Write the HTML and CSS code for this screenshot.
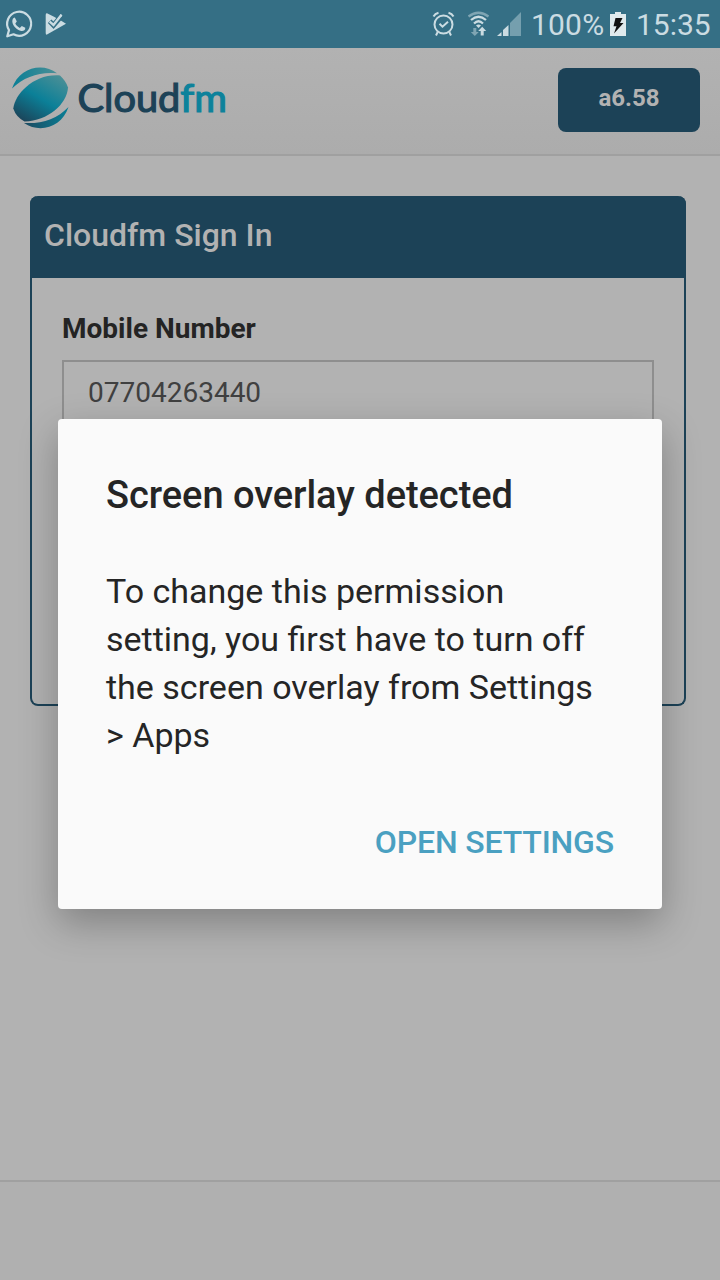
FILE: index.html
```
<!DOCTYPE html>
<html lang="en">
<head>
<meta charset="utf-8">
<title>Cloudfm Sign In</title>
<link rel="stylesheet" href="styles.css">
</head>
<body>
<div class="screen">
  <div class="status">
    <svg class="status-left" width="80" height="48" viewBox="0 0 80 48" fill="none" stroke="#cbdce2">
      <path d="M7.300 36.300L9 30.100A12 12 0 1 1 13.500 34.300Z" stroke-width="2.200" stroke-linejoin="round"/>
      <path d="M14.800 17.500l2 4-1.500 2c1 2 2.500 3.400 4.500 4.400l2-1.900 3.500 1.800c.2 2.500-2 3.500-4 3.200-4.500-.8-8.600-5-9-9.400-.1-2 .8-4 2.500-4.100Z" fill="#cbdce2" stroke="none"/>
      <path d="M47 13.300L54.500 17 57 18.500 61 14 62 15.500 60 20 66 23.700 47 34.600Q45.700 35 45.700 33V15Q45.700 13 47 13.300Z" fill="#cbdce2" stroke="none"/>
      <path d="M49.700 21.300L53.500 25.200 61 16.500" stroke="#356f85" stroke-width="5"/>
      <path d="M49.700 21.600L53.500 25 61.500 14.700" stroke-width="2.400"/>
    </svg>
    <svg class="status-right" width="96" height="48" viewBox="428 0 96 48" fill="none" stroke="#cbdce2">
      <circle cx="443.500" cy="24.500" r="9" stroke-width="2"/>
      <path d="M439.500 23.700l3 3 5.500-5M437.700 32l-1.700 3.500M449.300 32l1.700 3.500M433.500 16.500Q435 13.700 438.500 12.800M448.500 12.800Q452 13.700 453.500 16.500" stroke-width="2"/>
      <path d="M468.500 16.500Q478.500 9 488.500 16.500" stroke="#7fa5b3" stroke-width="2.200"/>
      <path d="M471 20Q478.500 13.500 486 20M474 23.500Q478.500 19 483 23.500" stroke-width="2.200"/>
      <path d="M476 25.500Q478.500 23.500 481 25.500L478.500 28Z" fill="#cbdce2" stroke="none"/>
      <path d="M473.300 28h3v4h2.500l-4 4-4-4h2.500Z" fill="#7fa5b3" stroke="none"/>
      <path d="M480.700 35.500h3v-4.500h2.500l-4-4.200-4 4.200h2.500Z" fill="#cbdce2" stroke="none"/>
      <path d="M510 36V23L521 12V36Z" fill="#759fae" stroke="none"/>
      <path d="M497 36L501.500 32V36ZM503 36V30L508.500 25V36Z" fill="#cbdce2" stroke="none"/>
    </svg>
    <span class="percent">100%</span>
    <svg class="battery" width="16" height="48" viewBox="0 0 16 48">
      <path d="M0 14H5V12H11V14H16V36H0Z" fill="#e0eaed"/>
      <path d="M5.500 18H12.500L10 23H13.500L4 33.500 6.500 26.200H3.500Z" fill="#111"/>
    </svg>
    <span class="time">15:35</span>
  </div>
  <header class="header">
    <svg class="logo" width="240" height="100" viewBox="0 48 240 100">
      <defs>
        <linearGradient id="ball" x1="0.850" y1="0" x2="0.150" y2="1">
          <stop offset="0" stop-color="#4b8f96"/><stop offset=".5" stop-color="#0b8098"/><stop offset="1" stop-color="#1c4257"/>
        </linearGradient>
        <linearGradient id="rim" x1="0" y1="0" x2="1" y2="0">
          <stop offset="0" stop-color="#087f96"/><stop offset="1" stop-color="#4b8f96"/>
        </linearGradient>
        <linearGradient id="rim2" x1="0" y1="0" x2="1" y2="0">
          <stop offset="0" stop-color="#1c4a60"/><stop offset="1" stop-color="#087f96"/>
        </linearGradient>
      </defs>
      <path d="M13.300 108.500C15 94 34 73.500 60 75.500Q66 81 68 87.500C67 104 48 121 24.500 121.500Q16 117 13.300 108.500Z" fill="url(#ball)"/>
      <path d="M12 88.500C19 67 43 62 57 73.200C40 71.500 24 76.500 12 88.500Z" fill="url(#rim)"/>
      <path d="M24 123C42 124 57 119 68.500 107C62 127 40 134 24 123Z" fill="url(#rim2)"/>
      <text class="wordmark" x="77.500" y="111.500" textLength="149.500" lengthAdjust="spacingAndGlyphs">Cloud<tspan class="wordmark-fm">fm</tspan></text>
    </svg>
    <div class="version">a6.58</div>
  </header>
  <main class="main">
    <section class="card">
      <h1 class="card-title">Cloudfm Sign In</h1>
      <div class="form">
        <label class="label">Mobile Number</label>
        <div class="input">07704263440</div>
      </div>
    </section>
  </main>
  <footer class="footer"></footer>
  <div class="dialog">
    <h2 class="dialog-title">Screen overlay detected</h2>
    <p class="message">To change this permission<br>setting, you first have to turn off<br>the screen overlay from Settings<br>&gt; Apps</p>
    <div class="action">OPEN SETTINGS</div>
  </div>
</div>
</body>
</html>
```
FILE: styles.css
```
* { box-sizing: border-box; }
body { margin: 0; font-family: Roboto, sans-serif; }
.screen { position: relative; display: flex; flex-direction: column; width: 720px; height: 1280px; overflow: hidden; background: #b2b2b2; }
.status { display: flex; height: 48px; flex: none; background: #356f85; color: #cbdce2; font-size: 30px; line-height: 50px; white-space: nowrap; }
.status-left { flex: none; }
.status-right { flex: none; margin-left: 348px; }
.percent { width: 86px; padding-left: 7px; letter-spacing: .2px; }
.battery { flex: none; }
.time { padding-left: 10px; }
.header { display: flex; flex: none; justify-content: space-between; height: 108px; padding-right: 20px; border-bottom: 2px solid #a0a0a0; background: linear-gradient(#b2b2b2, #acacac); }
.wordmark { font: 400 38px Lato, sans-serif; fill: #1c4257; stroke: #1c4257; stroke-width: 1.2px; }
.wordmark-fm { fill: #0d829b; stroke: #0d829b; }
.version { width: 142px; height: 64px; margin-top: 20px; border-radius: 8px; background: #1c4257; color: #b2b2b2; font-size: 24px; font-weight: 700; line-height: 60px; text-align: center; }
.main { flex: 1; padding: 40px 34px 0 30px; }
.card { height: 510px; border: 2px solid #1c4257; border-top: 0; border-radius: 8px; }
.card-title { height: 82px; margin: 0 -2px; padding: 2px 0 0 14px; border-radius: 8px 8px 0 0; background: #1c4257; color: #b2b2b2; font-size: 32px; font-weight: 500; line-height: 75px; }
.form { padding: 30px; }
.label { display: block; height: 52px; color: #242424; font-size: 28px; font-weight: 700; line-height: 42px; }
.input { height: 68px; padding-left: 24px; border: 2px solid #8e8e8e; color: #404040; font-size: 28px; line-height: 62px; }
.footer { flex: none; height: 100px; border-top: 2px solid #a0a0a0; background: #b0b0b0; }
.dialog { position: absolute; left: 58px; top: 419px; width: 604px; height: 490px; padding: 48px; border-radius: 4px; background: #fafafa; color: #252525; box-shadow: 0 14px 38px rgba(0, 0, 0, .28); }
.dialog-title { margin: 0 0 44px; font-size: 38px; font-weight: 500; line-height: 56px; letter-spacing: -.04px; white-space: nowrap; }
.message { margin: 0; font-size: 34px; line-height: 48px; white-space: nowrap; }
.action { margin-top: 59px; color: #4aa0c1; font-size: 32px; font-weight: 500; line-height: 48px; letter-spacing: -.15px; text-align: right; }
```
